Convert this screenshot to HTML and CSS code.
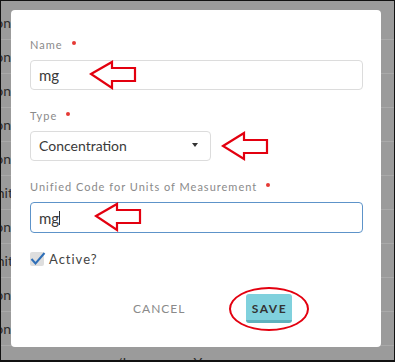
FILE: index.html
```html
<!DOCTYPE html>
<html lang="en">
<head>
  <meta charset="UTF-8">
  <title>Edit unit</title>
  <meta name="viewport" content="width=device-width, initial-scale=1.0">
  <link rel="stylesheet" href="styles.css">
</head>
<body>

<div class="screen">
  <!-- table behind the dialog -->
  <div class="table">
    <div class="row"><span class="cell cut">Concentration</span></div>
    <div class="row"><span class="cell cut">Concentration</span></div>
    <div class="row"><span class="cell cut">Concentration</span></div>
    <div class="row"><span class="cell cut">Concentration</span></div>
    <div class="row"><span class="cell cut">Concentration</span></div>
    <div class="row"><span class="cell cut wide">Units</span></div>
    <div class="row"><span class="cell cut">Concentration</span></div>
    <div class="row"><span class="cell cut wide">Units</span></div>
    <div class="row"><span class="cell cut">Concentration</span></div>
    <div class="row"><span class="cell cut">Concentration</span></div>
    <div class="row">
      <span class="cell cut">Concentration</span>
      <span class="cell code">ug/L</span>
      <span class="cell flag">Yes</span>
    </div>
  </div>

  <!-- dialog -->
  <div class="modal">
    <div class="field">
      <label class="label">Name <span class="req"></span></label>
      <div class="control">
        <input class="input" type="text" value="mg">
        <svg class="arrow arrow-name" width="48" height="30" viewBox="0 0 48 30">
          <polygon points="2,14 23,2 23,8 46,8 46,21 23,21 23,28" />
        </svg>
      </div>
    </div>

    <div class="field">
      <label class="label">Type <span class="req"></span></label>
      <div class="control">
        <div class="select">
          <span>Concentration</span>
          <span class="caret"></span>
        </div>
        <svg class="arrow arrow-type" width="48" height="30" viewBox="0 0 48 30">
          <polygon points="2,15 23,2 23,9 46,9 46,22 23,22 23,28" />
        </svg>
      </div>
    </div>

    <div class="field">
      <label class="label">Unified Code for Units of Measurement <span class="req"></span></label>
      <div class="control">
        <input class="input focused" type="text" value="mg">
        <span class="cursor"></span>
        <svg class="arrow arrow-code" width="48" height="30" viewBox="0 0 48 30">
          <polygon points="2,14 23,2 23,8 46,8 46,21 23,21 23,28" />
        </svg>
      </div>
    </div>

    <label class="check">
      <span class="box">
        <svg width="16" height="16" viewBox="0 0 16 16">
          <polyline points="1.5,8 5.5,12.5 14.5,2" />
        </svg>
      </span>
      Active?
    </label>

    <div class="actions">
      <button class="btn-cancel">CANCEL</button>
      <div class="save-wrap">
        <button class="btn-save">SAVE</button>
        <span class="ring"></span>
      </div>
    </div>
  </div>
</div>

</body>
</html>
```

FILE: styles.css
```css
* {
  margin: 0;
  padding: 0;
  box-sizing: border-box;
}

body {
  font-family: 'Lato', sans-serif;
  background: #fff;
}

.screen {
  position: relative;
  width: 395px;
  height: 362px;
  border: 1px solid #111;
  border-bottom-width: 2px;
  background: #9b9b9b;
  overflow: hidden;
}

/* Table dimmed behind the dialog */
.table {
  padding-top: 5px;
}

.row {
  height: 34px;
  display: flex;
  align-items: center;
  border-bottom: 1px solid #a9a9a9;
  color: #2c2c2c;
  font-size: 14px;
}

.cell {
  white-space: nowrap;
}

.cut {
  width: 10px;
  display: flex;
  justify-content: flex-end;
  overflow: hidden;
}

.cut.wide {
  width: 18px;
}

.code {
  margin-left: 90px;
}

.flag {
  margin-left: 64px;
}

/* Dialog */
.modal {
  position: absolute;
  left: 10px;
  top: 9px;
  width: 370px;
  height: 337px;
  background: #fff;
  border-radius: 4px;
  padding: 27px 18px 0 19px;
}

.field {
  margin-bottom: 18px;
}

.label {
  display: flex;
  align-items: center;
  height: 14px;
  margin-bottom: 9px;
  font-size: 11px;
  letter-spacing: 1px;
  color: #8a8a8a;
}

.req {
  width: 4px;
  height: 4px;
  margin-left: 9px;
  margin-top: -3px;
  border-radius: 50%;
  background: #e53935;
}

.control {
  position: relative;
}

.input,
.select {
  width: 100%;
  height: 30px;
  border: 1px solid #dcdcdc;
  border-radius: 4px;
  padding: 0 8px;
  font-family: 'Lato', sans-serif;
  font-size: 15px;
  color: #3a3a3a;
  background: #fff;
  outline: none;
}

.input.focused {
  height: 31px;
  border: 1.5px solid #5d93c9;
}

.select {
  width: 181px;
  display: flex;
  align-items: center;
  justify-content: space-between;
  font-size: 14px;
  padding-right: 12px;
  padding-bottom: 2px;
}

.caret {
  width: 0;
  height: 0;
  border-left: 3.5px solid transparent;
  border-right: 3.5px solid transparent;
  border-top: 4px solid #333;
}

.cursor {
  position: absolute;
  left: 29px;
  top: 9px;
  width: 1px;
  height: 14px;
  background: #333;
}

/* Red annotation marks */
.arrow {
  position: absolute;
  top: 0;
}

.arrow polygon {
  fill: #fff;
  stroke: #e3000f;
  stroke-width: 2.2;
  stroke-linejoin: miter;
}

.arrow-name {
  left: 59px;
}

.arrow-type {
  left: 191px;
}

.arrow-code {
  left: 64px;
}

.check {
  display: flex;
  align-items: center;
  gap: 5px;
  margin-top: 2px;
  font-size: 13px;
  letter-spacing: 1px;
  color: #444;
}

.box {
  position: relative;
  width: 14px;
  height: 14px;
  border-radius: 2px;
  background: #dedede;
}

.box svg {
  position: absolute;
  left: 0;
  top: -1px;
}

.box polyline {
  fill: none;
  stroke: #2f6fb8;
  stroke-width: 2;
}

.actions {
  display: flex;
  align-items: center;
  margin-top: 27px;
  padding-left: 87px;
}

.btn-cancel {
  border: none;
  background: none;
  padding: 0 16px;
  font-family: 'Lato', sans-serif;
  font-size: 12px;
  letter-spacing: 1px;
  color: #8a8a8a;
}

.save-wrap {
  position: relative;
  margin-left: 45px;
}

.btn-save {
  width: 46px;
  height: 29px;
  border: none;
  border-bottom: 3px solid #5fb1bd;
  border-radius: 3px;
  background: #80d1dd;
  font-family: 'Lato', sans-serif;
  font-size: 12px;
  font-weight: bold;
  letter-spacing: 1.5px;
  color: #333;
  padding-top: 2px;
}

.ring {
  position: absolute;
  left: -17px;
  top: -7px;
  width: 80px;
  height: 44px;
  border: 2.5px solid #e3000f;
  border-radius: 50%;
}
```
